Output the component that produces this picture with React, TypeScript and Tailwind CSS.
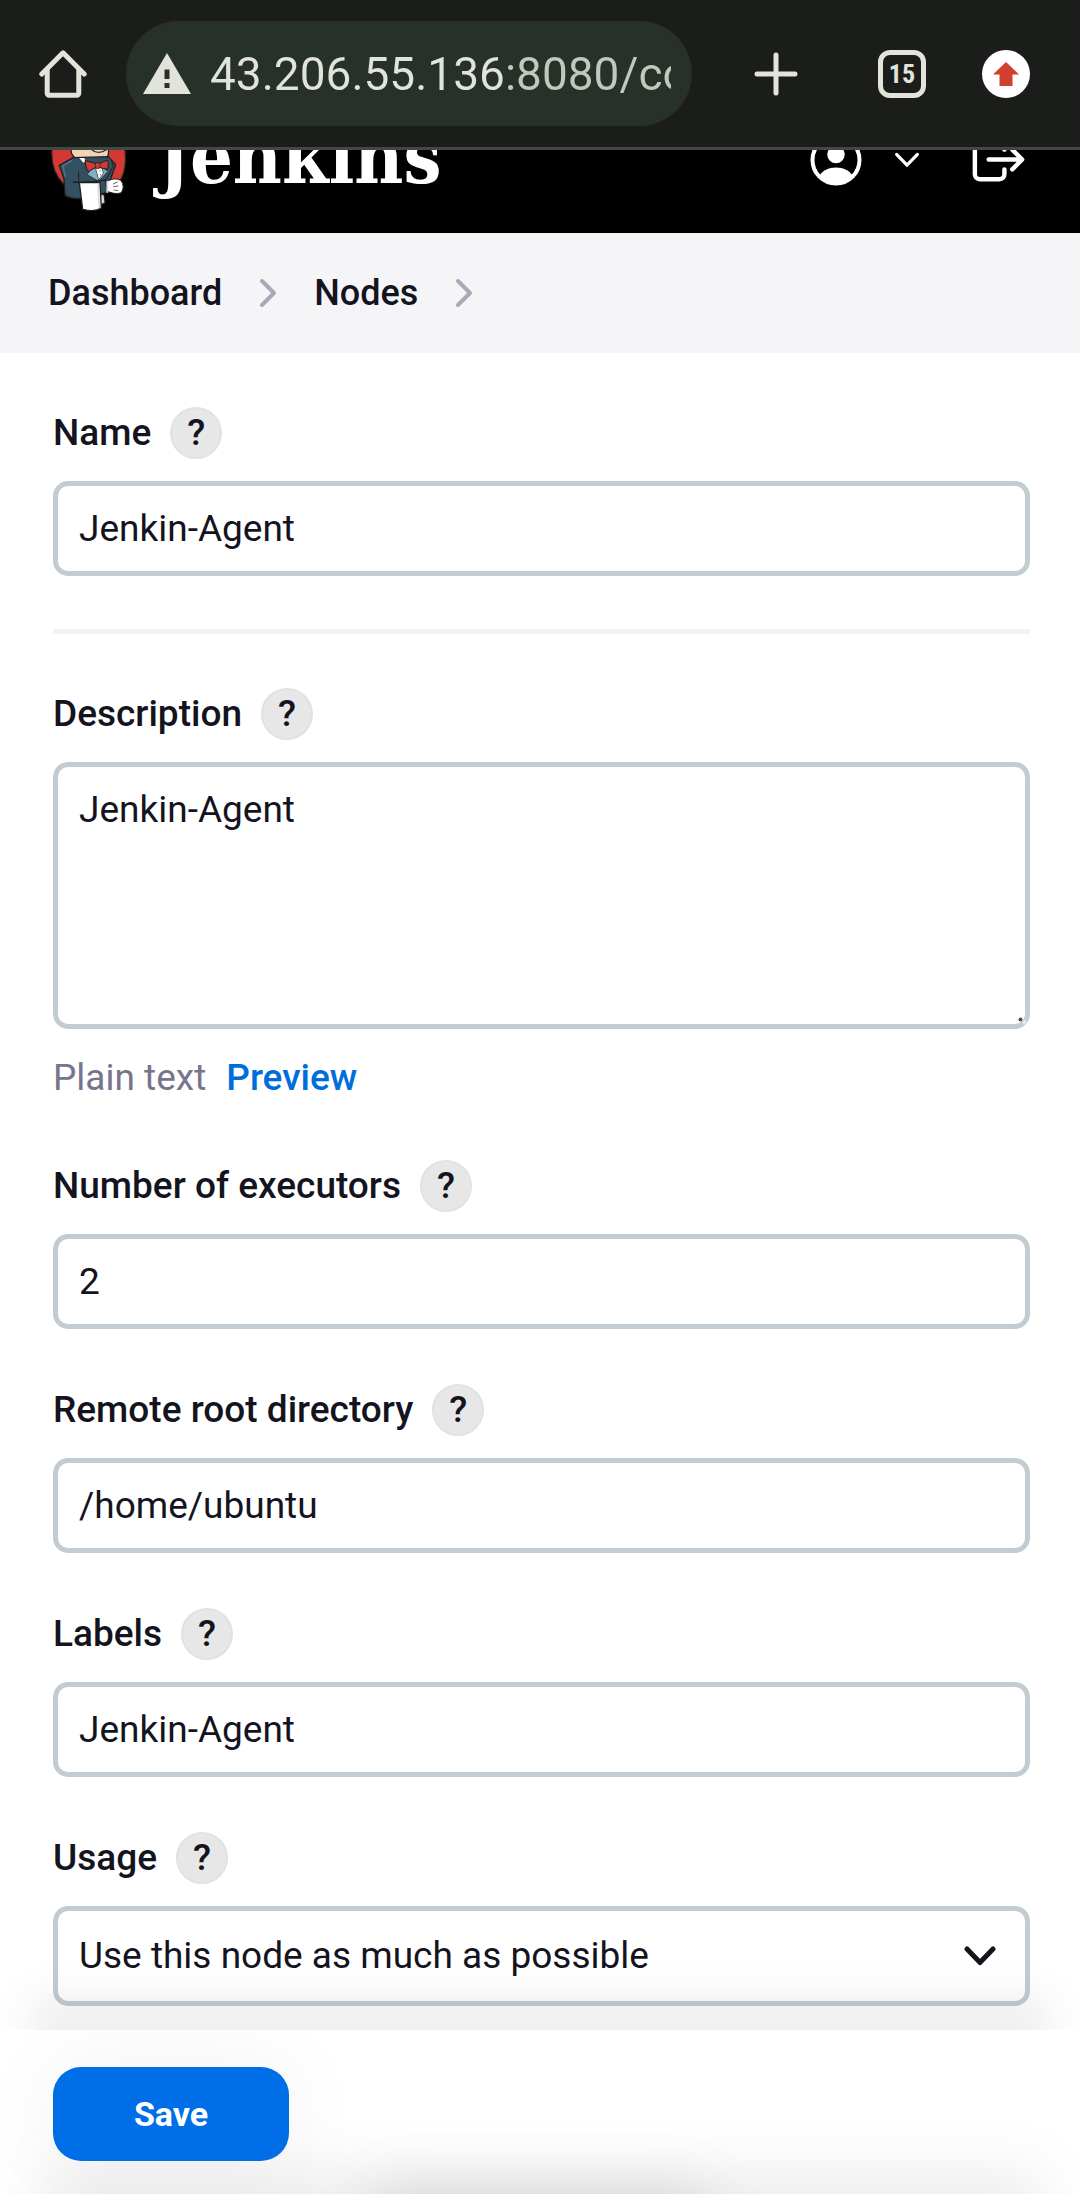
import React from "react";

const FIELD =
  "block w-full rounded-[15px] border-[5px] border-[#c3ccd1] bg-white px-[21px] text-[37px] leading-[44px] text-[#14141f] outline-none focus:border-[#006ee6]";

function HomeIcon() {
  return (
    <svg viewBox="0 0 48 48" className="size-12" fill="none" stroke="#e2e4dc" strokeWidth="5" strokeLinecap="round" strokeLinejoin="round" aria-hidden="true">
      <path d="M2.8 24 24 2.8 45.2 24" />
      <path d="M8.2 20v23.3a2 2 0 0 0 2 2h27.6a2 2 0 0 0 2-2V20" />
    </svg>
  );
}

function WarningIcon() {
  return (
    <svg viewBox="0 0 48 41" className="h-[41px] w-12 shrink-0" aria-hidden="true">
      <path d="M24 0 48 41H0z" fill="#e2e4dc" />
      <path d="M21.5 16.5h5v9.5h-5zM21.5 30h5v5h-5z" fill="#28302a" />
    </svg>
  );
}

function Mascot() {
  return (
    <svg viewBox="60 30 231 186" className="h-[62px] w-[77px]" strokeLinejoin="round" strokeLinecap="round" aria-hidden="true">
      <path d="M66 22c-4 40 4 80 34 110h164c22-28 26-70 20-110z" fill="#d33833" stroke="#231f20" strokeWidth="4" />
      <path d="M124 20c-4 18 4 36 30 41l70 2c10-10 14-26 10-43z" fill="#f0d6b7" stroke="#231f20" strokeWidth="4" />
      <path d="M184 27c8 12 30 14 44 3" fill="none" stroke="#231f20" strokeWidth="4" />
      <path d="M186 34c10 8 26 8 38 1" fill="none" stroke="#dcd9d8" strokeWidth="2" />
      <path d="M130 53 88 76l14 40 3 50c14 10 30 10 48 10h52l2-22 22-2 28-78-22-24z" fill="#335061" stroke="#231f20" strokeWidth="4" />
      <path d="M124 62 98 78l8 30" fill="none" stroke="#49728b" strokeWidth="5" />
      <path d="M146 96v34M244 60l6 18-24 46" fill="none" stroke="#231f20" strokeWidth="3" />
      <path d="m148 56 40 70 36-2 18-66z" fill="#335061" />
      <path d="m148 54 12 14 8-6-6-8z" fill="#fff" />
      <path d="m184 84-12 20 34 20 28-30-14-10z" fill="#81b0c4" stroke="#231f20" strokeWidth="2" />
      <path d="m196 82 10 38 14-20-4-18z" fill="#fff" stroke="#231f20" strokeWidth="2" />
      <circle cx="210" cy="93" r="1.5" fill="#231f20" />
      <circle cx="211" cy="104" r="1.5" fill="#231f20" />
      <path d="m166 62 30 8c4-3 10-3 14 0l22-10c4 8 4 20 0 28l-22-5c-4 3-10 3-14 0l-22 12c-6-10-8-22-8-33z" fill="#d33833" stroke="#231f20" strokeWidth="3" />
      <path d="M196 70v13M210 70v13" stroke="#231f20" strokeWidth="2" />
      <path d="M130 126c30 2 60 0 96-6l6 38-24 4" fill="#335061" stroke="#231f20" strokeWidth="4" />
      <path d="M232 124c12-8 26-10 40-3 10 12 10 28 0 38-14 4-28 0-40-5z" fill="#fff" stroke="#231f20" strokeWidth="3" />
      <path d="M250 132l12-6M250 140l14-2M252 150l12 2" stroke="#231f20" strokeWidth="2" />
      <path d="M232 126v30" stroke="#dcd9d8" strokeWidth="6" />
      <path d="M212 164h10l3 24-12 6z" fill="#dcd9d8" stroke="#231f20" strokeWidth="3" />
      <path d="M148 128h62l4 76c-14 10-40 8-56 4z" fill="#fff" stroke="#231f20" strokeWidth="4" />
      <path d="m204 132 4 70" stroke="#dcd9d8" strokeWidth="5" />
    </svg>
  );
}

function UserIcon() {
  return (
    <svg viewBox="0 0 52 52" className="size-[52px]" aria-hidden="true">
      <circle cx="26" cy="26" r="23.5" fill="none" stroke="#fff" strokeWidth="4" />
      <circle cx="26" cy="20.5" r="8.7" fill="#fff" />
      <path d="M9.500 41.500C12.500 36.500 18.500 33.500 26 33.500s13.500 3 16.500 8C39 47 33 50 26 50S13 47 9.500 41.500z" fill="#fff" />
    </svg>
  );
}

function Chevron({ className, width }: { className: string; width: number }) {
  return (
    <svg viewBox="0 0 32 20" className={className} fill="none" stroke="currentColor" strokeWidth={width} strokeLinecap="round" strokeLinejoin="round" aria-hidden="true">
      <path d="m3 3 13 13.500L29 3" />
    </svg>
  );
}

function Crumb({ children }: { children: string }) {
  return (
    <li className="flex items-center">
      <a href="#" className="text-4xl leading-[44px] font-medium">{children}</a>
      <svg viewBox="0 0 18 30" className="mx-[37px] h-[30px] w-[18px]" fill="none" stroke="#a9a7b8" strokeWidth="4" strokeLinecap="round" strokeLinejoin="round" aria-hidden="true">
        <path d="m3 3 12 12L3 27" />
      </svg>
    </li>
  );
}

function Field({ id, label, children }: { id: string; label: string; children: React.ReactNode }) {
  return (
    <div className="flex flex-col gap-[22px]">
      <div className="flex h-[52px] items-center gap-[19px]">
        <label htmlFor={id} className="text-[37px] leading-[44px] font-medium">{label}</label>
        <button type="button" aria-label={`Help for ${label}`} className="size-[52px] rounded-full border-2 border-[#e2e2e2] bg-[#e7e7e7] text-[37px] leading-[44px] font-medium">
          ?
        </button>
      </div>
      {children}
    </div>
  );
}

export default function App() {
  return (
    <div className="flex min-h-screen flex-col bg-white text-[#14141f] [font-family:Roboto,sans-serif]">
      <div className="flex h-[150px] items-center border-b-[3px] border-[#414941] bg-[#1b1d1a] pr-[50px] pl-[39px]">
        <button type="button" aria-label="Home"><HomeIcon /></button>
        <div className="ml-[39px] flex h-[105px] min-w-0 flex-1 items-center rounded-full bg-[#28302a] pr-[21px] pl-[17px]">
          <WarningIcon />
          <input
            aria-label="Address"
            defaultValue="43.206.55.136:8080/co"
            className="ml-[19px] w-full min-w-0 bg-[linear-gradient(to_right,#e2e4dc_296px,#c0c9bb_296px)] bg-clip-text text-[46px] leading-[56px] text-transparent outline-none"
          />
        </div>
        <button type="button" aria-label="New tab" className="ml-[62px]">
          <svg viewBox="0 0 44 44" className="size-11" stroke="#e2e4dc" strokeWidth="5" strokeLinecap="round" aria-hidden="true">
            <path d="M22 3v38M3 22h38" />
          </svg>
        </button>
        <button type="button" aria-label="Tabs" className="ml-20 size-12 rounded-xl border-[5px] border-[#e2e4dc] text-[26px] leading-[36px] font-bold text-[#e2e4dc] [font-family:'Roboto_Condensed',Roboto,sans-serif]">15</button>
        <button type="button" aria-label="Update" className="ml-14 flex size-12 items-center justify-center rounded-full bg-white">
          <svg viewBox="0 0 26 24" className="h-6 w-[26px]" aria-hidden="true">
            <path d="M13 0 26 12.500h-6.500V24h-13V12.500H0z" fill="#d23f31" />
          </svg>
        </button>
      </div>

      <header className="flex h-[83px] items-end justify-between overflow-hidden bg-black pr-[50px] pl-[50px] text-white">
        <a href="#" className="flex items-end">
          <span className="pb-[21px]"><Mascot /></span>
          <span className="ml-[31px] pb-[36px] text-[75px] leading-[80px] font-bold [font-family:'DejaVu_Serif_Condensed','DejaVu_Serif',serif]">Jenkins</span>
        </a>
        <div className="flex h-[147px] items-center">
          <button type="button" aria-label="User" className="flex items-center gap-8">
            <UserIcon />
            <Chevron width={4} className="h-[16px] w-[26px]" />
          </button>
          <a href="#" aria-label="Log out" className="ml-[47px]">
            <svg viewBox="0 0 512 512" className="size-[63px]" fill="none" stroke="#fff" strokeWidth="36" strokeLinecap="round" strokeLinejoin="round" aria-hidden="true">
              <path d="M304 336v40a40 40 0 0 1-40 40H104a40 40 0 0 1-40-40V136a40 40 0 0 1 40-40h152c22 0 48 18 48 40v40M368 336l80-80-80-80M176 256h256" />
            </svg>
          </a>
        </div>
      </header>

      <nav aria-label="Breadcrumb" className="h-[120px] bg-[#f5f5f8] px-12 pt-[38px]">
        <ol className="flex"><Crumb>Dashboard</Crumb><Crumb>Nodes</Crumb></ol>
      </nav>

      <main className="relative flex-1 pt-[54px] pr-[50px] pb-6 pl-[53px]">
        <form id="node-form" className="flex flex-col">
          <Field id="name" label="Name">
            <input id="name" defaultValue="Jenkin-Agent" className={`${FIELD} h-[95px]`} />
          </Field>
          <hr className="mt-[53px] mb-[54px] border-t-[5px] border-[#f3f3f7]" />
          <Field id="description" label="Description">
            <div className="relative">
              <textarea id="description" defaultValue="Jenkin-Agent" className={`${FIELD} h-[267px] resize-none py-[21px]`} />
              <svg viewBox="0 0 10 10" className="absolute right-0.5 bottom-0.5 size-[10px]" aria-hidden="true">
                <circle cx="2.500" cy="2.500" r="2" fill="#4b4b50" />
                <path d="m5 6 3-2M5 7l3-3" stroke="#e5e9eb" strokeWidth="2.500" />
              </svg>
            </div>
          </Field>
          <div className="mt-[27px] flex gap-5 text-[37px] leading-[44px]">
            <span className="text-[#77758c]">Plain text</span>
            <a href="#" className="font-medium text-[#006ddd]">Preview</a>
          </div>
          <div className="mt-[60px] flex flex-col gap-[55px]">
            <Field id="executors" label="Number of executors">
              <input id="executors" defaultValue="2" className={`${FIELD} h-[95px]`} />
            </Field>
            <Field id="root-dir" label="Remote root directory">
              <input id="root-dir" defaultValue="/home/ubuntu" className={`${FIELD} h-[95px]`} />
            </Field>
            <Field id="labels" label="Labels">
              <input id="labels" defaultValue="Jenkin-Agent" className={`${FIELD} h-[95px]`} />
            </Field>
            <Field id="usage" label="Usage">
              <div className="relative">
                <select id="usage" className={`${FIELD} h-[100px] appearance-none`}>
                  <option>Use this node as much as possible</option>
                </select>
                <Chevron width={5} className="pointer-events-none absolute top-10 right-[34px] h-5 w-8" />
              </div>
            </Field>
          </div>
        </form>
        <div className="pointer-events-none absolute inset-x-0 bottom-0 h-[100px] overflow-hidden" aria-hidden="true">
          <div className="mx-[31px] mt-[64px] h-[120px] bg-black/6 blur-[18px]" />
        </div>
      </main>

      <footer className="relative h-[164px] overflow-hidden bg-white pt-[37px] pr-[50px] pl-[53px]">
        <div className="pointer-events-none absolute inset-0 overflow-hidden" aria-hidden="true">
          <div className="mx-[40px] mt-[144px] h-[120px] bg-black/8 blur-[30px]" />
          <div className="mx-[35%] -mt-[104px] h-[100px] bg-black/10 blur-[30px]" />
        </div>
        <button type="submit" form="node-form" className="relative h-[94px] w-[236px] rounded-[28px] bg-[#006ee6] text-[34px] leading-[44px] font-bold text-white shadow-[0_0_90px_rgba(0,0,0,0.06)]">Save</button>
      </footer>
    </div>
  );
}
